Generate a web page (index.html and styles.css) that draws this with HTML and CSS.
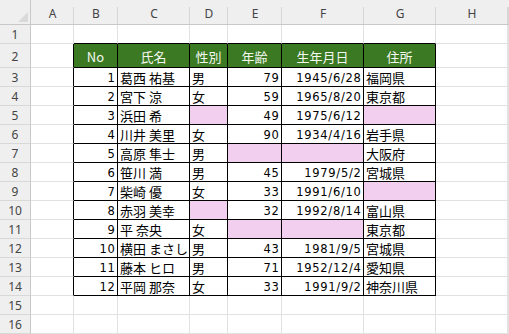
FILE: index.html
```html
<!DOCTYPE html>
<html lang="ja">
<head>
<meta charset="utf-8">
<title>Sheet</title>
<link rel="stylesheet" href="styles.css">
</head>
<body>
<div class="sheet">
  <!-- column headers -->
  <div class="corner"><div class="tri"></div></div>
  <div class="ch">A</div><div class="ch">B</div><div class="ch">C</div><div class="ch">D</div><div class="ch">E</div><div class="ch">F</div><div class="ch">G</div><div class="ch">H</div><div class="ch"></div>

  <!-- row 1 -->
  <div class="rh">1</div>
  <div class="c"></div><div class="c top"></div><div class="c top"></div><div class="c top"></div><div class="c top"></div><div class="c top"></div><div class="c top"></div><div class="c"></div><div class="c"></div>

  <!-- row 2 -->
  <div class="rh">2</div>
  <div class="c lft"></div>
  <div class="hd">No</div><div class="hd">氏名</div><div class="hd">性別</div><div class="hd">年齢</div><div class="hd">生年月日</div><div class="hd">住所</div>
  <div class="c"></div><div class="c"></div>

  <!-- row 3 -->
  <div class="rh">3</div><div class="c lft"></div>
  <div class="t num">1</div><div class="t txt">葛西 祐基</div><div class="t txt">男</div><div class="t num">79</div><div class="t num">1945/6/28</div><div class="t txt">福岡県</div>
  <div class="c"></div><div class="c"></div>

  <!-- row 4 -->
  <div class="rh">4</div><div class="c lft"></div>
  <div class="t num">2</div><div class="t txt">宮下 涼</div><div class="t txt">女</div><div class="t num">59</div><div class="t num">1965/8/20</div><div class="t txt">東京都</div>
  <div class="c"></div><div class="c"></div>

  <!-- row 5 -->
  <div class="rh">5</div><div class="c lft"></div>
  <div class="t num">3</div><div class="t txt">浜田 希</div><div class="t pk"></div><div class="t num">49</div><div class="t num">1975/6/12</div><div class="t pk"></div>
  <div class="c"></div><div class="c"></div>

  <!-- row 6 -->
  <div class="rh">6</div><div class="c lft"></div>
  <div class="t num">4</div><div class="t txt">川井 美里</div><div class="t txt">女</div><div class="t num">90</div><div class="t num">1934/4/16</div><div class="t txt">岩手県</div>
  <div class="c"></div><div class="c"></div>

  <!-- row 7 -->
  <div class="rh">7</div><div class="c lft"></div>
  <div class="t num">5</div><div class="t txt">高原 隼士</div><div class="t txt">男</div><div class="t pk"></div><div class="t pk"></div><div class="t txt">大阪府</div>
  <div class="c"></div><div class="c"></div>

  <!-- row 8 -->
  <div class="rh">8</div><div class="c lft"></div>
  <div class="t num">6</div><div class="t txt">笹川 満</div><div class="t txt">男</div><div class="t num">45</div><div class="t num">1979/5/2</div><div class="t txt">宮城県</div>
  <div class="c"></div><div class="c"></div>

  <!-- row 9 -->
  <div class="rh">9</div><div class="c lft"></div>
  <div class="t num">7</div><div class="t txt">柴崎 優</div><div class="t txt">女</div><div class="t num">33</div><div class="t num">1991/6/10</div><div class="t pk"></div>
  <div class="c"></div><div class="c"></div>

  <!-- row 10 -->
  <div class="rh">10</div><div class="c lft"></div>
  <div class="t num">8</div><div class="t txt">赤羽 美幸</div><div class="t pk"></div><div class="t num">32</div><div class="t num">1992/8/14</div><div class="t txt">富山県</div>
  <div class="c"></div><div class="c"></div>

  <!-- row 11 -->
  <div class="rh">11</div><div class="c lft"></div>
  <div class="t num">9</div><div class="t txt">平 奈央</div><div class="t txt">女</div><div class="t pk"></div><div class="t pk"></div><div class="t txt">東京都</div>
  <div class="c"></div><div class="c"></div>

  <!-- row 12 -->
  <div class="rh">12</div><div class="c lft"></div>
  <div class="t num">10</div><div class="t txt">横田 まさし</div><div class="t txt">男</div><div class="t num">43</div><div class="t num">1981/9/5</div><div class="t txt">宮城県</div>
  <div class="c"></div><div class="c"></div>

  <!-- row 13 -->
  <div class="rh">13</div><div class="c lft"></div>
  <div class="t num">11</div><div class="t txt">藤本 ヒロ</div><div class="t txt">男</div><div class="t num">71</div><div class="t num">1952/12/4</div><div class="t txt">愛知県</div>
  <div class="c"></div><div class="c"></div>

  <!-- row 14 -->
  <div class="rh">14</div><div class="c lft"></div>
  <div class="t num">12</div><div class="t txt">平岡 那奈</div><div class="t txt">女</div><div class="t num">33</div><div class="t num">1991/9/2</div><div class="t txt">神奈川県</div>
  <div class="c"></div><div class="c"></div>

  <!-- row 15 -->
  <div class="rh">15</div>
  <div class="c"></div><div class="c"></div><div class="c"></div><div class="c"></div><div class="c"></div><div class="c"></div><div class="c"></div><div class="c"></div><div class="c"></div>

  <!-- row 16 -->
  <div class="rh">16</div>
  <div class="c"></div><div class="c"></div><div class="c"></div><div class="c"></div><div class="c"></div><div class="c"></div><div class="c"></div><div class="c"></div><div class="c"></div>
</div>
</body>
</html>
```

FILE: styles.css
```css
html, body {
  margin: 0;
  padding: 0;
  background: #ffffff;
  overflow: hidden;
}

.sheet {
  display: grid;
  grid-template-columns: 31px 43px 44px 72px 38px 54px 82px 72px 72px 1fr;
  grid-template-rows: 25px 19px 24px repeat(14, 19px);
  width: 509px;
  height: 334px;
  font-family: "Noto Sans CJK JP", sans-serif;
  font-size: 13px;
  color: #000;
}

.sheet > div {
  box-sizing: border-box;
  display: flex;
  align-items: center;
  min-width: 0;
  overflow: hidden;
  white-space: nowrap;
}

.corner {
  background: #efefef;
  border-right: 1px solid #c8c8c8;
  border-bottom: 1px solid #c8c8c8;
  justify-content: flex-end;
  align-items: flex-end !important;
  padding: 0 2px 2px 0;
}

.tri {
  width: 10px;
  height: 10px;
  background: #d9d9d9;
  clip-path: polygon(100% 0, 100% 100%, 0 100%);
}

.ch {
  background: #efefef linear-gradient(#d6d6d6, #d6d6d6) no-repeat right bottom / 1px 17px;
  border-bottom: 1px solid #c8c8c8;
  justify-content: center;
  padding-top: 3px;
  font-family: "Noto Sans", "Liberation Sans", sans-serif;
  font-size: 12px;
  color: #444;
}

.rh {
  background: #efefef;
  border-right: 1px solid #c8c8c8;
  border-bottom: 1px solid #d8d8d8;
  justify-content: center;
  padding-top: 1px;
  font-family: "Noto Sans", "Liberation Sans", sans-serif;
  font-size: 12px;
  color: #444;
}

.c {
  border-right: 1px solid #e1e1e1;
  border-bottom: 1px solid #e1e1e1;
}

.c.top {
  border-bottom-color: #000;
}

.c.lft {
  border-right-color: #000;
}

.hd {
  background: #3b7a23;
  color: #f4f8f0;
  border-right: 1px solid #000;
  border-bottom: 1px solid #000;
  justify-content: center;
  padding-top: 1px;
}

.t {
  border-right: 1px solid #000;
  border-bottom: 1px solid #000;
}

.pk {
  background: #f2cfee;
}

.num {
  justify-content: flex-end;
  padding-right: 1.5px;
  padding-top: 1px;
  font-family: "DejaVu Sans", sans-serif;
  font-size: 11.5px;
  letter-spacing: 0.7px;
}

.txt {
  justify-content: flex-start;
  padding-left: 2px;
}
```
